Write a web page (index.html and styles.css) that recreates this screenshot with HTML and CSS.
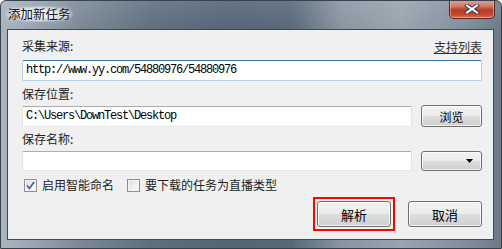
FILE: index.html
```html
<!DOCTYPE html>
<html>
<head>
<meta charset="utf-8">
<link rel="stylesheet" href="styles.css">
</head>
<body>
<div class="window">
  <div class="titlebar">
    <span class="title">添加新任务</span>
    <div class="close">
      <svg width="16" height="10" viewBox="0 0 16 10">
        <path d="M3 1.5 L13 8.5 M13 1.5 L3 8.5" stroke="#3b3f52" stroke-width="4" stroke-linecap="square"/>
        <path d="M3 1.5 L13 8.5 M13 1.5 L3 8.5" stroke="#ffffff" stroke-width="2" stroke-linecap="square"/>
      </svg>
    </div>
  </div>
  <div class="panel">
    <div class="label split"><span>采集来源:</span><a class="link">支持列表</a></div>
    <div class="input focus mono url">http://www.yy.com/54880976/54880976</div>
    <div class="label l2">保存位置:</div>
    <div class="field f2">
      <div class="input mono grow">C:\Users\DownTest\Desktop</div>
      <div class="btn side">浏览</div>
    </div>
    <div class="label l3">保存名称:</div>
    <div class="field f3">
      <div class="input grow"></div>
      <div class="btn side combo">
        <svg width="7" height="4" viewBox="0 0 7 4"><path d="M0 0 H7 L3.5 4 Z" fill="#000"/></svg>
      </div>
    </div>
    <div class="checks">
      <label class="check"><span class="box on"><svg width="9" height="9" viewBox="0 0 9 9"><path d="M1 4.5 L3.5 7.5 L8 1" stroke="#3c5a9a" stroke-width="1.6" fill="none"/></svg></span>启用智能命名</label>
      <label class="check"><span class="box"></span>要下载的任务为直播类型</label>
    </div>
    <div class="actions">
      <div class="marked"><div class="btn wide">解析</div></div>
      <div class="btn wide">取消</div>
    </div>
  </div>
</div>
</body>
</html>
```
FILE: styles.css
```css
* { box-sizing: border-box; }
html, body { margin: 0; padding: 0; background: #ffffff; }
body {
  font-family: "Noto Sans CJK SC", "Liberation Sans", sans-serif;
  font-size: 12px;
  color: #000;
}
.window {
  width: 502px;
  height: 249px;
  border: 1px solid #39434e;
  border-radius: 6px 6px 0 0;
  background:
    linear-gradient(180deg, rgba(255,255,255,0.1) 0%, rgba(255,255,255,0) 30px),
    linear-gradient(90deg, #a9b4bf 0%, #9aa6b2 6%, #7a8896 16%, #5f6f7f 30%, #536577 45%, #576879 58%, #8895a1 68%, #98a4af 80%, #8390a0 92%, #6c7a88 100%);
  display: flex;
  flex-direction: column;
  overflow: hidden;
}
.titlebar {
  height: 28px;
  display: flex;
  justify-content: space-between;
  align-items: flex-start;
  padding-left: 7px;
  padding-right: 6px;
}
.title {
  margin-top: 5px;
  line-height: 16px;
  font-size: 12.5px;
  color: #111;
  padding: 0 2px;
  margin-left: -2px;
  background: radial-gradient(ellipse at center, rgba(235,240,245,0.95) 30%, rgba(235,240,245,0.5) 60%, rgba(235,240,245,0) 75%);
  text-shadow: 0 0 4px #fff;
}
.close {
  margin-top: -1px;
  width: 46px;
  height: 19px;
  border: 1px solid #5a2a24;
  border-top: none;
  border-radius: 0 0 5px 5px;
  background: linear-gradient(180deg, #e0a294 0%, #d07a68 35%, #b83a22 55%, #c4452c 80%, #d8705a 100%);
  box-shadow: inset 0 0 0 1px rgba(255,210,200,0.45);
  display: flex;
  align-items: center;
  justify-content: center;
}
.panel {
  flex: 1;
  margin: 0 7px 8px 6px;
  background: #f0f0f0;
  border: 1px solid #3d4955;
  padding: 9px 11px 0 14px;
  display: flex;
  flex-direction: column;
}
.label {
  height: 14px;
  line-height: 14px;
  color: #222;
}
.split {
  display: flex;
  justify-content: space-between;
}
.link {
  color: #333;
  text-decoration: underline;
  margin-top: 1px;
}
.input {
  height: 21px;
  background: #fff;
  border: 1px solid #abadb3;
  border-left-color: #e2e3ea;
  border-right-color: #dbdfe6;
  border-bottom-color: #e3e9ef;
  border-radius: 2px;
  padding: 0 3px;
  line-height: 19px;
}
.focus {
  border-color: #b5cfe7;
  border-top-color: #3d7bad;
}
.mono {
  font-family: "Liberation Mono", "DejaVu Sans Mono", monospace;
  font-size: 12px;
  letter-spacing: -1.2px;
  color: #000;
}
.url { margin-top: 7px; }
.l2 { margin-top: 6px; }
.f2 { margin-top: 5px; }
.l3 { margin-top: 5px; }
.f3 { margin-top: 5px; }
.field {
  display: flex;
  gap: 9px;
  align-items: flex-start;
}
.grow { flex: 1; }
.f3 .input { height: 20px; }
.btn {
  border: 1px solid #707070;
  border-radius: 3px;
  background: linear-gradient(180deg, #f2f2f2 0%, #ebebeb 48%, #dddddd 52%, #cfcfcf 100%);
  box-shadow: inset 0 0 0 1px rgba(255,255,255,0.7);
  display: flex;
  align-items: center;
  justify-content: center;
  color: #000;
}
.side {
  width: 61px;
  height: 22px;
  margin-top: -1px;
}
.combo {
  height: 20px;
  margin-top: 0;
  justify-content: flex-end;
  padding-right: 8px;
}
.checks {
  margin-top: 7px;
  display: flex;
  gap: 13px;
  padding-left: 2px;
  height: 14px;
  align-items: center;
}
.check {
  display: flex;
  align-items: center;
  gap: 5px;
  color: #222;
  line-height: 14px;
}
.box {
  width: 13px;
  height: 13px;
  border: 1px solid #8e8f8f;
  background: linear-gradient(135deg, #dcdcdc 0%, #f4f4f4 70%, #fbfbfb 100%);
  box-shadow: inset 0 0 0 1px #f4f4f4;
  display: flex;
  align-items: center;
  justify-content: center;
}
.actions {
  margin-top: 9px;
  display: flex;
  justify-content: flex-end;
  gap: 17px;
}
.wide {
  width: 74px;
  height: 26px;
  font-size: 13px;
}
.marked {
  border: 2px solid #ff0000;
  padding: 2px;
  margin: -4px;
}
```
